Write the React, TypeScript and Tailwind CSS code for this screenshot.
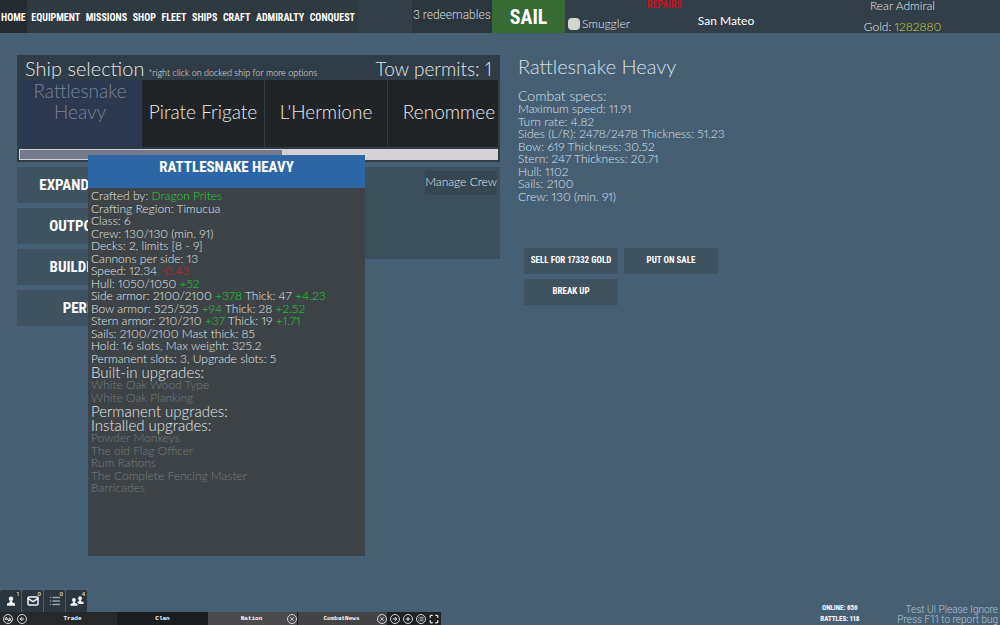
import type { ReactNode } from "react";
import { useState } from "react";
import {
  ArrowLeft,
  ArrowRight,
  List,
  Mail,
  Maximize,
  Plus,
  X,
} from "lucide-react";
import clsx from "clsx";

const menu = ["Home", "Equipment", "Missions", "Shop", "Fleet", "Ships", "Craft", "Admiralty", "Conquest"];

const ships = ["Rattlesnake Heavy", "Pirate Frigate", "L'Hermione", "Renommee"];

const portActions = ["Expand Dock", "Outposts", "Buildings", "Perks"];

const combatSpecs = [
  "Maximum speed: 11.91",
  "Turn rate: 4.82",
  "Sides (L/R): 2478/2478 Thickness: 51.23",
  "Bow: 619 Thickness: 30.52",
  "Stern: 247 Thickness: 20.71",
  "Hull: 1102",
  "Sails: 2100",
  "Crew: 130 (min. 91)",
];

const builtIn = ["White Oak Wood Type", "White Oak Planking"];

const installed = [
  "Powder Monkeys",
  "The old Flag Officer",
  "Rum Rations",
  "The Complete Fencing Master",
  "Barricades",
];

const condensed = "font-['Liberation_Sans_Narrow','Roboto_Condensed','Open_Sans_Condensed',sans-serif] font-bold uppercase";

function Good({ children }: { children: ReactNode }) {
  return <span className="text-[#1fd42e]">{children}</span>;
}

function Bad({ children }: { children: ReactNode }) {
  return <span className="text-[#d0282e]">{children}</span>;
}

function Lines({ items, className }: { items: ReactNode[]; className?: string }) {
  return (
    <ul className={clsx("text-xs", className)}>
      {items.map((item, i) => (
        <li key={i} className="whitespace-nowrap leading-[12px] even:leading-[13px]">
          {item}
        </li>
      ))}
    </ul>
  );
}

function TopBar() {
  const [smuggler, setSmuggler] = useState(false);

  return (
    <header className="grid h-[33px] shrink-0 grid-cols-[358fr_207fr_80fr_160fr_195fr] overflow-hidden bg-[#323e48]">
      <nav className="flex justify-between bg-[#2f3940] pr-0.5">
        {menu.map((item, i) => (
          <a
            key={item}
            href="#"
            className={clsx(
              condensed,
              "flex items-center px-px pt-0.5 text-[10px] text-white",
              i === 0 && "bg-[#252c31]"
            )}
          >
            {item}
          </a>
        ))}
      </nav>
      <div className="flex justify-end">
        <button className="w-20 whitespace-nowrap bg-[#2d353d] pb-1 font-['Roboto',sans-serif] text-xs text-gray-300">
          3 redeemables
        </button>
        <button className={clsx(condensed, "w-[73px] bg-[#386a35] text-xl text-white")}>Sail</button>
      </div>
      <div className="flex items-end pb-0.5 pl-[3px]">
        <label className="flex items-center gap-0.5 whitespace-nowrap text-xs leading-[14px] text-gray-200">
          <input
            type="checkbox"
            checked={smuggler}
            onChange={() => setSmuggler(!smuggler)}
            className="size-3 appearance-none rounded-sm bg-[#d4d4d4] checked:bg-gray-600"
          />
          Smuggler
        </label>
      </div>
      <div className="flex flex-col gap-1 pl-0.5 text-white">
        <span className={clsx(condensed, "text-[10px] leading-[10px] text-[#c4141c]")}>Repairs</span>
        <span className="text-center text-xs font-normal leading-[14px]">San Mateo</span>
      </div>
      <div className="flex flex-col items-center justify-between text-xs leading-3 text-gray-200">
        <span>Rear Admiral</span>
        <span>
          Gold: <span className="text-[#d3d736]">1282880</span>
        </span>
      </div>
    </header>
  );
}

function ShipSelection() {
  return (
    <section className="border-x-2 border-b-2 border-[#303c46] bg-[#303c46]">
      <div className="flex h-[25px] items-baseline overflow-hidden px-1.5 text-[#e5e8ea]">
        <h2 className="text-xl leading-[26px]">Ship selection</h2>
        <span className="ml-1 text-[9px]">*right click on docked ship for more options</span>
        <span className="ml-auto text-[19px] leading-[26px]">Tow permits: 1</span>
      </div>
      <div className="flex h-[67px] gap-px overflow-hidden">
        {ships.map((ship, i) => (
          <button
            key={ship}
            className={clsx(
              "flex w-[122px] shrink-0 justify-center text-[19px] leading-[21px]",
              i === 0 ? "items-start bg-[#2b3850] px-2 text-[#7a8494]" : "items-center bg-[#202427] pb-1 text-[#e8eaec]"
            )}
          >
            {ship}
          </button>
        ))}
      </div>
      <div className="mt-0.5 h-[11px] border border-[#d3d1d3] bg-[#d3d1d3]">
        <div className="h-full w-[55%] bg-[#737a8c]" />
      </div>
    </section>
  );
}

function ShipTooltip() {
  return (
    <div
      role="tooltip"
      className="absolute left-[88px] top-[122px] h-[401px] w-[277px] bg-[#3d4346] text-[#e4e7e9]"
    >
      <h3 className={clsx(condensed, "flex h-[33px] items-center justify-center pb-2 text-[15px] text-white bg-[#2d66a6]")}>
        Rattlesnake Heavy
      </h3>
      <div className="px-[3px] pt-0.5">
        <Lines
          items={[
            <>Crafted by: <Good>Dragon Prites</Good></>,
            "Crafting Region: Timucua",
            "Class: 6",
            "Crew: 130/130 (min. 91)",
            "Decks: 2, limits [8 - 9]",
            "Cannons per side: 13",
            <>Speed: 12.34 <Bad>-0.43</Bad></>,
            <>Hull: 1050/1050 <Good>+52</Good></>,
            <>Side armor: 2100/2100 <Good>+378</Good> Thick: 47 <Good>+4.23</Good></>,
            <>Bow armor: 525/525 <Good>+94</Good> Thick: 28 <Good>+2.52</Good></>,
            <>Stern armor: 210/210 <Good>+37</Good> Thick: 19 <Good>+1.71</Good></>,
            "Sails: 2100/2100 Mast thick: 85",
            "Hold: 16 slots, Max weight: 325.2",
            "Permanent slots: 3, Upgrade slots: 5",
          ]}
        />
        <h4 className="text-[15px] leading-[14px]">Built-in upgrades:</h4>
        <Lines items={builtIn} className="text-[#777d80]" />
        <h4 className="text-[15px] leading-[14px]">Permanent upgrades:</h4>
        <h4 className="text-[15px] leading-[14px]">Installed upgrades:</h4>
        <Lines items={installed} className="text-[#777d80]" />
      </div>
    </div>
  );
}

function ActionButton({ children }: { children: ReactNode }) {
  return (
    <button className={clsx(condensed, "h-[26px] whitespace-nowrap bg-[#3f525f] text-[9px] text-white")}>
      {children}
    </button>
  );
}

function ShipDetails() {
  return (
    <section className="flex-1 pl-[18px] pt-[22px] text-[#d5e0e8]">
      <h1 className="text-xl leading-[22px]">Rattlesnake Heavy</h1>
      <h2 className="mt-3 text-sm leading-[14px]">Combat specs:</h2>
      <Lines items={combatSpecs} />
      <div className="ml-1.5 mt-[45px] grid w-[194px] grid-cols-2 gap-x-1.5 gap-y-[5px]">
        <ActionButton>Sell for 17332 gold</ActionButton>
        <ActionButton>Put on sale</ActionButton>
        <ActionButton>Break up</ActionButton>
      </div>
    </section>
  );
}

function Person() {
  return (
    <svg viewBox="0 0 10 12" className="h-2.5 w-2" fill="currentColor">
      <circle cx="5" cy="3.2" r="2.8" />
      <path d="M3.5 5.5h3v2L10 9v3H0V9l3.5-1.5z" />
    </svg>
  );
}

function Group() {
  return (
    <svg viewBox="0 0 16 11" className="h-2.5 w-3.5" fill="currentColor">
      <circle cx="4.5" cy="4.4" r="2.2" />
      <path d="M3.5 6h2v1.5l3 1.3V11H.5V8.8l3-1.3z" />
      <circle cx="11.5" cy="2.3" r="2.2" />
      <path d="M10.5 4h2v1.5l3 1.3V9H9.5V8L8 7l2.5-1.5z" />
    </svg>
  );
}

function RoundIcon({ label, children }: { label: string; children: ReactNode }) {
  return (
    <button
      aria-label={label}
      className="flex size-2.5 shrink-0 items-center justify-center rounded-full border border-gray-300 text-gray-200"
    >
      {children}
    </button>
  );
}

function FontSize() {
  return (
    <svg viewBox="0 0 12 12" className="size-2" fill="none" stroke="currentColor" strokeWidth="1.4">
      <path d="M1.5 7.5 3.5 3l2 4.5M2.2 6h2.6M6 10l2.5-6L11 10M7 8h3" />
    </svg>
  );
}

const tray = [
  { label: "Friends", count: 1, icon: <Person /> },
  { label: "Mail", count: 0, icon: <Mail className="size-3" strokeWidth={3} /> },
  { label: "Log", count: 0, icon: <List className="size-3 text-gray-400" strokeWidth={3} /> },
  { label: "Group", count: 4, icon: <Group /> },
];

const channels = [
  { name: "Trade", style: "bg-[#26282a]", closable: false },
  { name: "Clan", style: "bg-[#1b1d20]", closable: false },
  { name: "Nation", style: "bg-[#4a4a4d]", closable: true },
  { name: "CombatNews", style: "bg-[#434346]", closable: true },
];

function ChatBar() {
  return (
    <div>
      <div className="flex w-[87px] gap-px">
        {tray.map(({ label, count, icon }) => (
          <button
            key={label}
            aria-label={label}
            className="relative flex h-[22px] flex-1 items-center justify-center rounded-t-xs bg-[#2b353d] text-gray-100"
          >
            {icon}
            <span className="absolute right-0.5 top-0 font-['Roboto',sans-serif] text-[6px] font-normal leading-[8px]">
              {count}
            </span>
          </button>
        ))}
      </div>
      <div className="flex h-[13px] w-[441px] items-center bg-[#1f2225] pr-0.5">
        <div className="flex h-full w-7 items-center gap-1 bg-[#26282a] pl-[3px]">
          <RoundIcon label="Font size"><FontSize /></RoundIcon>
          <RoundIcon label="Scroll left"><ArrowLeft className="size-1.5" strokeWidth={4} /></RoundIcon>
        </div>
        <div className="grid h-full flex-1 grid-cols-4">
          {channels.map(({ name, style, closable }) => (
            <div
              key={name}
              className={clsx("flex items-center border-r border-[#1b1d20]", style, closable && "pl-2")}
            >
              <button className="flex-1 font-['Liberation_Mono',monospace] text-[6px] font-bold text-white">
                {name}
              </button>
              {closable && <RoundIcon label={`Close ${name}`}><X className="size-1.5" strokeWidth={3} /></RoundIcon>}
            </div>
          ))}
        </div>
        <div className="flex gap-[3px] pl-0.5">
          <RoundIcon label="Scroll right"><ArrowRight className="size-1.5" strokeWidth={4} /></RoundIcon>
          <RoundIcon label="Add channel"><Plus className="size-1.5" strokeWidth={4} /></RoundIcon>
          <RoundIcon label="Channel list"><List className="size-1.5" strokeWidth={3} /></RoundIcon>
          <button aria-label="Expand chat" className="text-gray-200">
            <Maximize className="size-2.5" strokeWidth={3} />
          </button>
        </div>
      </div>
    </div>
  );
}

export default function App() {
  return (
    <div className="flex min-h-screen flex-col bg-[#475f73] font-['Lato',sans-serif] font-light proportional-nums">
      <TopBar />
      <main className="relative flex flex-1">
        <div className="w-1/2 pl-[17px] pt-[22px]">
          <ShipSelection />
          <div className="mt-[5px] flex items-start">
            <div className="flex w-[132px] flex-col gap-[5px]">
              {portActions.map((action) => (
                <button key={action} className={clsx(condensed, "h-9 bg-[#3f525f] text-[15px] text-white")}>
                  {action}
                </button>
              ))}
            </div>
            <section className="ml-1 flex h-[92px] flex-1 items-start justify-end bg-[#3c4f5d] pr-[3px] pt-1">
              <button className="h-6 bg-[#374751] pb-0.5 text-xs text-gray-200">Manage Crew</button>
            </section>
          </div>
        </div>
        <ShipDetails />
        <ShipTooltip />
      </main>
      <footer className="flex items-end">
        <ChatBar />
        <div className={clsx(condensed, "ml-auto pr-[38px] text-center text-[7px] leading-[11px] text-white")}>
          <p>Online: 656</p>
          <p>Battles: 118</p>
        </div>
        <div className="pr-0.5 text-right font-['Roboto',sans-serif] text-[10px] leading-[10px] text-[#b4c3cf]">
          <p>Test UI Please Ignore</p>
          <p>Press F11 to report bug</p>
        </div>
      </footer>
    </div>
  );
}
